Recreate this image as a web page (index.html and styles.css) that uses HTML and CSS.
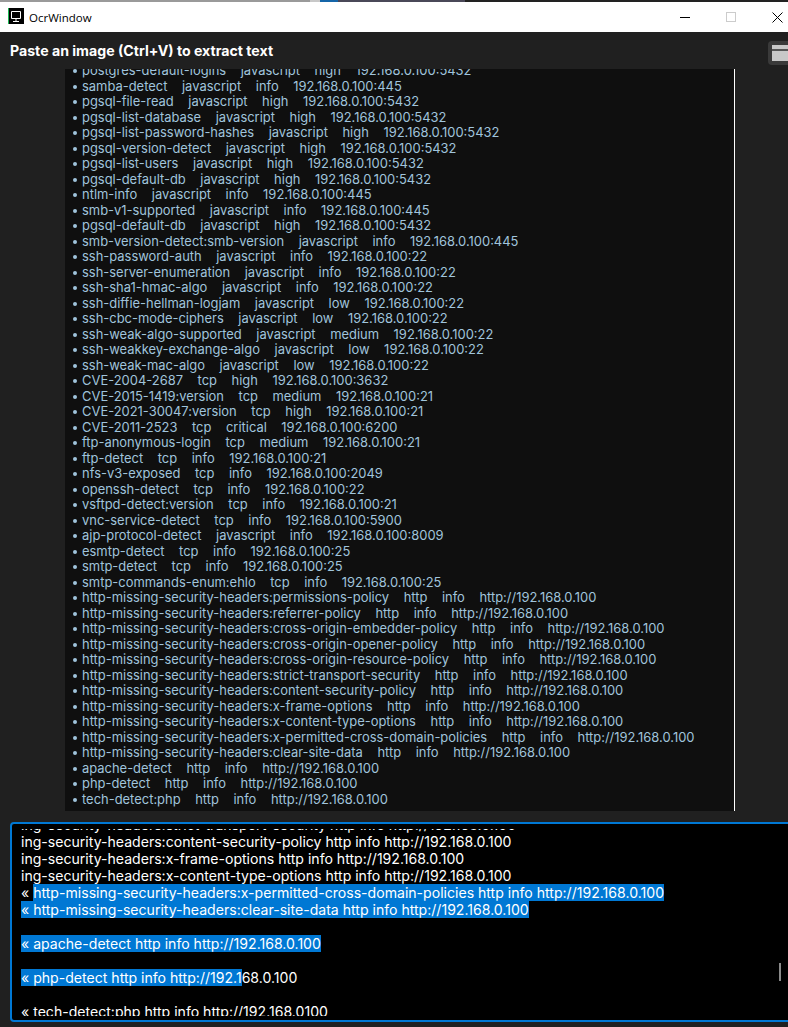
FILE: index.html
```html
<!DOCTYPE html>
<html lang="en">
<head>
<meta charset="utf-8">
<title>OcrWindow</title>
<link rel="stylesheet" href="styles.css">
</head>
<body>
<div class="desktop-strip"></div>
<header class="titlebar">
  <svg class="app-icon" width="16" height="16" viewBox="0 0 16 16"><rect width="16" height="16" fill="#000"/><rect width="1" height="16" fill="#1db954"/><path d="M3.500 3.500h9v7h-9z" fill="none" stroke="#fff"/><path d="M8 11v2M5 13.500h6" stroke="#fff"/></svg>
  <span class="window-title">OcrWindow</span>
  <div class="window-buttons">
    <svg width="11" height="11" viewBox="0 0 11 11"><path d="M0 5.500h10" stroke="#000"/></svg>
    <svg width="11" height="11" viewBox="0 0 11 11"><rect x=".5" y=".5" width="9" height="9" fill="none" stroke="#ccc"/></svg>
    <svg width="11" height="11" viewBox="0 0 11 11"><path d="M.5.5l10 10M10.500.5l-10 10" stroke="#000"/></svg>
  </div>
</header>
<main class="app">
  <div class="app-head">
    <h1>Paste an image (Ctrl+V) to extract text</h1>
    <div class="menu-btn"><span></span></div>
  </div>
  <div class="shot-wrap">
    <div class="shot">
      <ul class="findings">
        <li>postgres-default-logins    javascript    high    192.168.0.100:5432</li>
        <li>samba-detect    javascript    info    192.168.0.100:445</li>
        <li>pgsql-file-read    javascript    high    192.168.0.100:5432</li>
        <li>pgsql-list-database    javascript    high    192.168.0.100:5432</li>
        <li>pgsql-list-password-hashes    javascript    high    192.168.0.100:5432</li>
        <li>pgsql-version-detect    javascript    high    192.168.0.100:5432</li>
        <li>pgsql-list-users    javascript    high    192.168.0.100:5432</li>
        <li>pgsql-default-db    javascript    high    192.168.0.100:5432</li>
        <li>ntlm-info    javascript    info    192.168.0.100:445</li>
        <li>smb-v1-supported    javascript    info    192.168.0.100:445</li>
        <li>pgsql-default-db    javascript    high    192.168.0.100:5432</li>
        <li>smb-version-detect:smb-version    javascript    info    192.168.0.100:445</li>
        <li>ssh-password-auth    javascript    info    192.168.0.100:22</li>
        <li>ssh-server-enumeration    javascript    info    192.168.0.100:22</li>
        <li>ssh-sha1-hmac-algo    javascript    info    192.168.0.100:22</li>
        <li>ssh-diffie-hellman-logjam    javascript    low    192.168.0.100:22</li>
        <li>ssh-cbc-mode-ciphers    javascript    low    192.168.0.100:22</li>
        <li>ssh-weak-algo-supported    javascript    medium    192.168.0.100:22</li>
        <li>ssh-weakkey-exchange-algo    javascript    low    192.168.0.100:22</li>
        <li>ssh-weak-mac-algo    javascript    low    192.168.0.100:22</li>
        <li>CVE-2004-2687    tcp    high    192.168.0.100:3632</li>
        <li>CVE-2015-1419:version    tcp    medium    192.168.0.100:21</li>
        <li>CVE-2021-30047:version    tcp    high    192.168.0.100:21</li>
        <li>CVE-2011-2523    tcp    critical    192.168.0.100:6200</li>
        <li>ftp-anonymous-login    tcp    medium    192.168.0.100:21</li>
        <li>ftp-detect    tcp    info    192.168.0.100:21</li>
        <li>nfs-v3-exposed    tcp    info    192.168.0.100:2049</li>
        <li>openssh-detect    tcp    info    192.168.0.100:22</li>
        <li>vsftpd-detect:version    tcp    info    192.168.0.100:21</li>
        <li>vnc-service-detect    tcp    info    192.168.0.100:5900</li>
        <li>ajp-protocol-detect    javascript    info    192.168.0.100:8009</li>
        <li>esmtp-detect    tcp    info    192.168.0.100:25</li>
        <li>smtp-detect    tcp    info    192.168.0.100:25</li>
        <li>smtp-commands-enum:ehlo    tcp    info    192.168.0.100:25</li>
        <li>http-missing-security-headers:permissions-policy    http    info    http://192.168.0.100</li>
        <li>http-missing-security-headers:referrer-policy    http    info    http://192.168.0.100</li>
        <li>http-missing-security-headers:cross-origin-embedder-policy    http    info    http://192.168.0.100</li>
        <li>http-missing-security-headers:cross-origin-opener-policy    http    info    http://192.168.0.100</li>
        <li>http-missing-security-headers:cross-origin-resource-policy    http    info    http://192.168.0.100</li>
        <li>http-missing-security-headers:strict-transport-security    http    info    http://192.168.0.100</li>
        <li>http-missing-security-headers:content-security-policy    http    info    http://192.168.0.100</li>
        <li>http-missing-security-headers:x-frame-options    http    info    http://192.168.0.100</li>
        <li>http-missing-security-headers:x-content-type-options    http    info    http://192.168.0.100</li>
        <li>http-missing-security-headers:x-permitted-cross-domain-policies    http    info    http://192.168.0.100</li>
        <li>http-missing-security-headers:clear-site-data    http    info    http://192.168.0.100</li>
        <li>apache-detect    http    info    http://192.168.0.100</li>
        <li>php-detect    http    info    http://192.168.0.100</li>
        <li>tech-detect:php    http    info    http://192.168.0.100</li>
      </ul>
    </div>
  </div>
  <div class="result">
    <div class="result-clip">
      <div class="result-text">
        <div class="line">ing-security-headers:strict-transport-security http info http://192.168.0.100</div>
        <div class="line">ing-security-headers:content-security-policy http info http://192.168.0.100</div>
        <div class="line">ing-security-headers:x-frame-options http info http://192.168.0.100</div>
        <div class="line">ing-security-headers:x-content-type-options http info http://192.168.0.100</div>
        <div class="line">« <span class="sel">http-missing-security-headers:x-permitted-cross-domain-policies http info http://192.168.0.100</span></div>
        <div class="line"><span class="sel">« http-missing-security-headers:clear-site-data http info http://192.168.0.100</span></div>
        <div class="line">&nbsp;</div>
        <div class="line"><span class="sel">« apache-detect http info http://192.168.0.100</span></div>
        <div class="line">&nbsp;</div>
        <div class="line"><span class="sel">« php-detect http info http://192.1</span>68.0.100</div>
        <div class="line">&nbsp;</div>
        <div class="line">« tech-detect:php http info http://192.168.0100</div>
      </div>
    </div>
    <div class="scroll-thumb"></div>
  </div>
</main>
</body>
</html>
```
FILE: styles.css
```css
html, body { margin: 0; padding: 0; height: 100%; overflow: hidden; }
body { font-family: Inter, "Liberation Sans", sans-serif; background: #202020; display: flex; flex-direction: column; }
.desktop-strip { height: 2px; flex: none; background: linear-gradient(90deg, #9a9a9a 0 310px, #c8c8c8 310px 320px, #1565a8 320px 338px, #4a4858 338px 465px, #222 465px); }
.titlebar { height: 30px; flex: none; background: #fff; display: flex; align-items: center; padding-left: 8px; }
.app-icon { flex: none; margin-bottom: 2px; }
.window-title { font-family: "Open Sans", sans-serif; font-size: 11.5px; color: #000; margin-left: 5px; }
.window-buttons { margin-left: auto; display: flex; gap: 35px; padding-right: 5px; }
.app { flex: 1; min-height: 0; background: #202020; display: flex; flex-direction: column; }
.app-head { height: 37px; flex: none; display: flex; align-items: center; justify-content: space-between; padding-left: 10px; box-sizing: border-box; }
.app-head h1 { margin: 0; font-size: 14.15px; font-weight: 700; color: #fff; }
.menu-btn { width: 20px; height: 24px; background: #3a3a3a; border-radius: 4px 0 0 4px; display: flex; align-items: center; padding-left: 4px; box-sizing: border-box; margin-top: 4px; }
.menu-btn span { display: block; width: 100%; height: 16px; background: linear-gradient(#c8c8c8 0 4px, #555 4px 6px, #c8c8c8 6px); }
.shot-wrap { height: 742px; flex: none; padding-left: 65px; }
.shot { width: 669px; height: 742px; background: #0f0f0f; border-right: 1px solid #fff; overflow: hidden; }
.findings { list-style: none; margin: -6px 0 0; padding: 0 0 0 8px; }
.findings li { display: flex; height: 15.5px; font-size: 12.95px; line-height: 15.5px; color: #a0c4dc; white-space: pre; }
.findings li::before { content: ""; flex: none; width: 4px; height: 4px; margin: 6px 5px 0 0; border-radius: 50%; background: #a0c4dc; }
.result { position: relative; margin: 11px 0 0 10px; height: 200px; flex: none; box-sizing: border-box; width: 790px; background: #000; border: 2px solid #0078d4; border-radius: 4px; padding: 5px 9px; }
.result-clip { height: 187px; overflow: hidden; }
.result-text { margin-top: -13px; }
.line { font-size: 14.09px; line-height: 17px; color: #fff; white-space: pre; }
.sel { background: #0078d4; }
.scroll-thumb { position: absolute; left: 767px; top: 139px; width: 2px; height: 18px; background: #8a8a8a; }
```
